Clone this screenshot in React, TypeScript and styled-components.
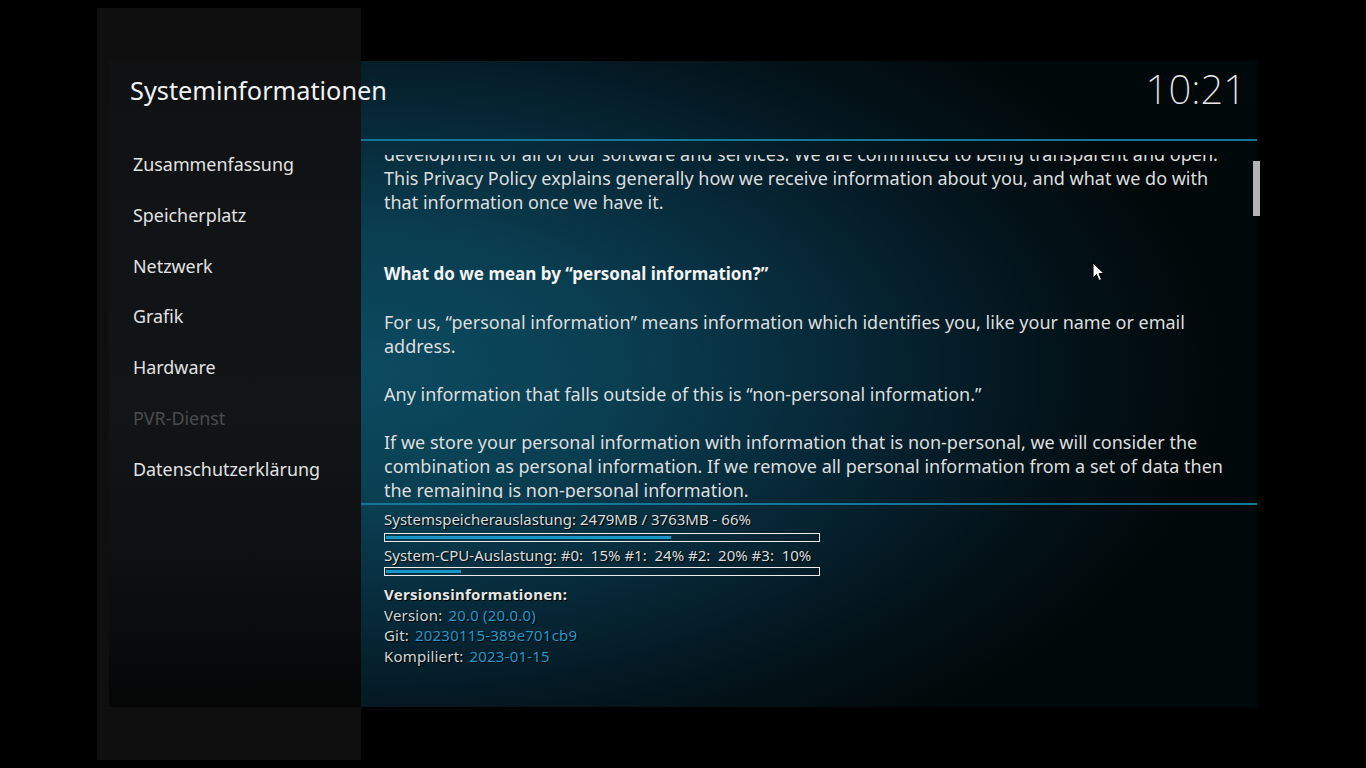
import React from 'react';
import styled, { createGlobalStyle } from 'styled-components';

const GlobalStyle = createGlobalStyle`
  html, body {
    margin: 0;
    padding: 0;
    background: #000;
  }
  body {
    font-family: "Noto Sans", "Open Sans", sans-serif;
  }
`;

const Screen = styled.div`
  width: 1366px;
  height: 768px;
  position: relative;
  display: grid;
  grid-template-columns: 1366px;
  grid-template-rows: 768px;
  overflow: hidden;
  background: #000;
`;

const BackPanel = styled.div`
  grid-area: 1 / 1;
  margin: 8px 0 0 97px;
  width: 264px;
  height: 752px;
  background: #0f0f0f;
`;

const Dialog = styled.div`
  grid-area: 1 / 1;
  margin: 61px 0 0 109px;
  width: 1148px;
  height: 646px;
  display: flex;
  flex-direction: column;
  background:
    linear-gradient(180deg, #0f1113 0%, #121518 55%, #0c0e10 82%, #050606 100%) left top / 252px 100% no-repeat,
    radial-gradient(ellipse 75% 70% at 22% 48%, #0c4b61 0%, #0a3e51 30%, #062635 58%, #03141b 80%, #010809 100%);
`;

const Header = styled.div`
  height: 78px;
  display: flex;
  justify-content: space-between;
  align-items: flex-start;
  padding: 0 11px 0 21px;
`;

const Title = styled.div`
  margin-top: 12px;
  font-size: 25.3px;
  line-height: 34px;
  color: #f2f2f2;
`;

const Clock = styled.div`
  margin-top: 5px;
  font-size: 40px;
  line-height: 46px;
  font-weight: 200;
  color: #e8e8e8;
`;

const Body = styled.div`
  flex: 1;
  display: flex;
  min-height: 0;
`;

const Sidebar = styled.ul`
  width: 252px;
  margin: 0;
  padding: 0;
  list-style: none;
`;

const MenuItem = styled.li<{ $disabled?: boolean }>`
  height: 50.8px;
  line-height: 50.8px;
  padding-left: 24px;
  font-size: 17.9px;
  color: ${(p) => (p.$disabled ? '#4a4c4e' : '#e2e2e2')};
`;

const Main = styled.div`
  flex: 1;
  display: flex;
  flex-direction: column;
  border-top: 2px solid #14779a;
`;

const ContentRow = styled.div`
  display: flex;
  margin-top: 14px;
  height: 343px;
`;

const TextViewport = styled.div`
  flex: 1;
  overflow: hidden;
  padding-left: 23px;
`;

const TextInner = styled.div`
  margin-top: -13px;
  font-size: 18px;
  line-height: 24px;
  color: #dedede;
`;

const Paragraph = styled.p`
  margin: 0 0 24px 0;
  white-space: nowrap;
`;

const Heading = styled.p`
  margin: 48px 0 24px 0;
  font-size: 17px;
  font-weight: 700;
  color: #f4f4f4;
  white-space: nowrap;
`;

const ScrollTrack = styled.div`
  width: 7px;
  margin-right: -3px;
  padding-top: 6px;
`;

const ScrollThumb = styled.div`
  height: 55px;
  background: #b3b3b3;
`;

const InfoSection = styled.div`
  margin-top: 5px;
  border-top: 2px solid #14779a;
  padding: 5px 0 0 23px;
  font-size: 15px;
  color: #dcdcdc;
  text-shadow: 1px 1px 1px #000;
`;

const UsageLabel = styled.div<{ $gap?: number }>`
  margin-top: ${(p) => p.$gap ?? 0}px;
  line-height: 18px;
  white-space: nowrap;
`;

const Bar = styled.div<{ $gap?: number }>`
  width: 436px;
  height: 9px;
  box-sizing: border-box;
  margin-top: ${(p) => p.$gap ?? 0}px;
  border: 1px solid #ececec;
  padding: 2px 1px;
`;

const BarFill = styled.div`
  height: 3px;
  background: #1896c8;
`;

const VersionTitle = styled.div`
  margin-top: 8px;
  font-size: 15px;
  line-height: 20.5px;
  font-weight: 700;
  letter-spacing: 0.3px;
  color: #e6e6e6;
`;

const VersionRow = styled.div`
  font-size: 15px;
  line-height: 20.5px;
  letter-spacing: 0.2px;
  color: #d6d6d6;
`;

const Value = styled.span`
  color: #2298c9;
  margin-left: 6px;
`;

const Cursor = styled.svg`
  position: absolute;
  left: 1092px;
  top: 262px;
`;

const menu = [
  { label: 'Zusammenfassung' },
  { label: 'Speicherplatz' },
  { label: 'Netzwerk' },
  { label: 'Grafik' },
  { label: 'Hardware' },
  { label: 'PVR-Dienst', disabled: true },
  { label: 'Datenschutzerklärung' },
];

const memoryUsage = 66;
const cpuUsage = (15 + 24 + 20 + 10) / 4;

export default function App() {
  return (
    <>
      <GlobalStyle />
      <Screen>
        <BackPanel />
        <Dialog>
          <Header>
            <Title>Systeminformationen</Title>
            <Clock>10:21</Clock>
          </Header>
          <Body>
            <Sidebar>
              {menu.map((item) => (
                <MenuItem key={item.label} $disabled={item.disabled}>
                  {item.label}
                </MenuItem>
              ))}
            </Sidebar>
            <Main>
              <ContentRow>
                <TextViewport>
                  <TextInner>
                    <Paragraph>
                      development of all of our software and services. We are committed to being transparent and open.
                      <br />
                      This Privacy Policy explains generally how we receive information about you, and what we do with
                      <br />
                      that information once we have it.
                    </Paragraph>
                    <Heading>What do we mean by “personal information?”</Heading>
                    <Paragraph>
                      For us, “personal information” means information which identifies you, like your name or email
                      <br />
                      address.
                    </Paragraph>
                    <Paragraph>
                      Any information that falls outside of this is “non-personal information.”
                    </Paragraph>
                    <Paragraph>
                      If we store your personal information with information that is non-personal, we will consider the
                      <br />
                      combination as personal information. If we remove all personal information from a set of data then
                      <br />
                      the remaining is non-personal information.
                    </Paragraph>
                    <Heading>How we receive information</Heading>
                  </TextInner>
                </TextViewport>
                <ScrollTrack>
                  <ScrollThumb />
                </ScrollTrack>
              </ContentRow>
              <InfoSection>
                <UsageLabel>Systemspeicherauslastung: 2479MB / 3763MB - 66%</UsageLabel>
                <Bar $gap={5}>
                  <BarFill style={{ width: `${memoryUsage}%` }} />
                </Bar>
                <UsageLabel $gap={4}>
                  System-CPU-Auslastung: #0:&nbsp; 15% #1:&nbsp; 24% #2:&nbsp; 20% #3:&nbsp; 10%
                </UsageLabel>
                <Bar $gap={3}>
                  <BarFill style={{ width: `${cpuUsage}%` }} />
                </Bar>
                <VersionTitle>Versionsinformationen:</VersionTitle>
                <VersionRow>
                  Version:<Value>20.0 (20.0.0)</Value>
                </VersionRow>
                <VersionRow>
                  Git:<Value>20230115-389e701cb9</Value>
                </VersionRow>
                <VersionRow>
                  Kompiliert:<Value>2023-01-15</Value>
                </VersionRow>
              </InfoSection>
            </Main>
          </Body>
        </Dialog>
        <Cursor width="13" height="20" viewBox="0 0 13 20">
          <path
            d="M1 1 L1 16 L4.5 12.5 L7 18.5 L9.5 17.5 L7 11.5 L12 11.5 Z"
            fill="#fff"
            stroke="#000"
            strokeWidth="1"
            strokeLinejoin="round"
          />
        </Cursor>
      </Screen>
    </>
  );
}
